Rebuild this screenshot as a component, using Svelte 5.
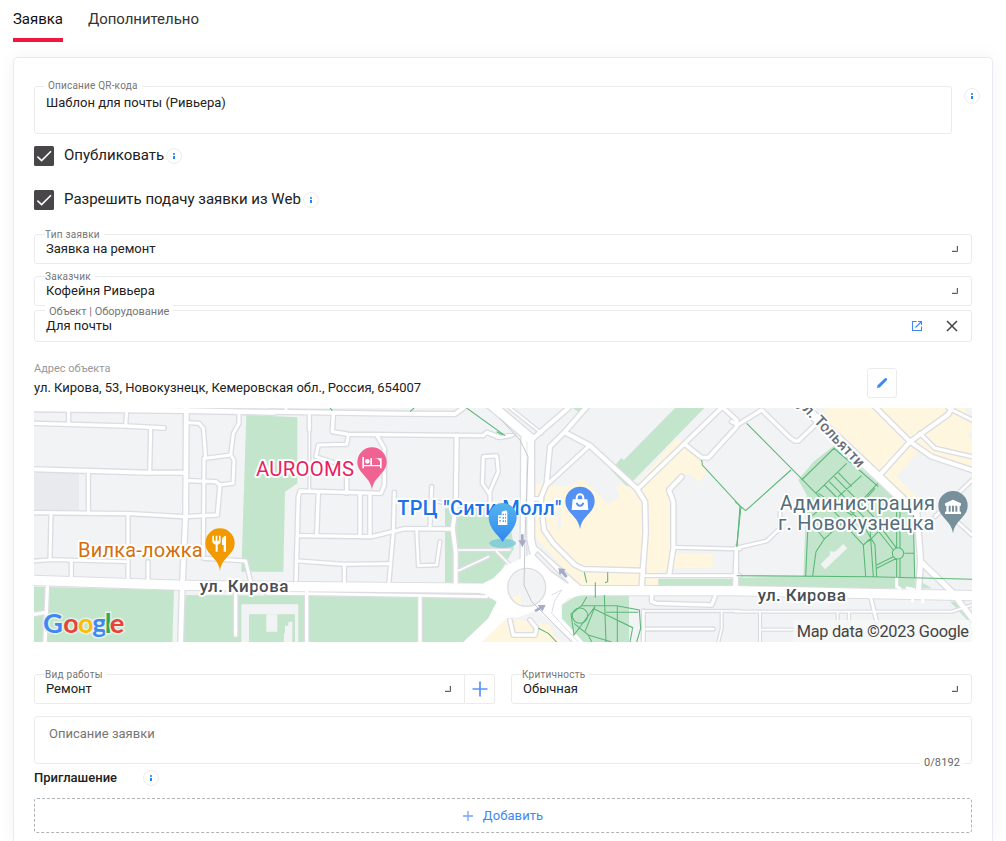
<script>
  const tabs = ['Заявка', 'Дополнительно'];

  // Each map tile keeps its own origin; roads are [width, path].
  const tiles = [
    {
      x: 0,
      roads: [
        [14, 'M0 12L450 17L720 22'],
        [10, 'M0 55L275 63L390 69'],
        [9, 'M104 20V55M278 20L275 60M350 70L347 200M163 203V320'],
        [12, 'M0 193L345 203L450 203'],
        [10, 'M0 323L290 326L450 335L550 330L558 240L545 230L460 227'],
        [14, 'M457 9L455 330L445 540L440 711'],
        [9, 'M465 53L495 55L508 70L515 160L590 150L598 85L615 55V25M590 150L600 165L597 235L555 240'],
        [9, 'M510 160L508 460L635 468L650 530'],
        [9, 'M51 330L48 460M282 330V525M342 470V525M112 470V525'],
        [8, 'M0 468L55 464L275 470'],
        [10, 'M40 545L33 711M0 628L35 622M605 560V690']
      ]
    },
    {
      x: 708,
      roads: [
        [12, 'M0 20L400 26L555 27L580 9'],
        [9, 'M48 9V20M118 30V75'],
        [4, 'M118 75V255'],
        [10, 'M190 28L187 80L235 88L640 92L650 82L690 97L720 92'],
        [9, 'M235 90L230 118L145 120L138 155L190 172'],
        [10, 'M320 90L343 130V240L333 265L90 258L85 275L78 525'],
        [10, 'M230 220V265M145 262L140 390M270 265V390M300 265V390'],
        [10, 'M88 392L305 395L405 371L550 372'],
        [9, 'M373 262L370 380L357 530M485 245L480 365'],
        [5, 'M490 285L520 295'],
        [12, 'M560 92L557 310L548 370L557 440V535'],
        [8, 'M440 375L445 482L500 480L510 410'],
        [9, 'M85 468L220 478L357 476M223 480V535'],
        [9, 'M657 265L637 235L640 155L680 152L685 200L660 258V300'],
        [5, 'M565 435H720M565 497L655 455M680 440L720 480'],
        [8, 'M-10 565L110 566L650 575'],
        [10, 'M110 560V711M450 578V711']
      ]
    },
    {
      x: 1398,
      roads: [
        [6, 'M30 9L125 85'],
        [12, 'M100 100L205 9'],
        [26, 'M-50 -20L92 100'],
        [6, 'M-10 98L40 90'],
        [16, 'M72 100L70 470'],
        [20, 'M92 100V400L100 440'],
        [12, 'M265 0L195 80L150 125L140 235L122 280L132 375L160 415L225 480L250 492L430 497'],
        [13, 'M195 82L270 122L410 250L435 290L437 380L425 545'],
        [10, 'M265 125L140 240M103 282H125'],
        [11, 'M415 250L670 3M555 118L605 158H625L710 65V45L670 9'],
        [12, 'M545 215L507 255L520 290V430L508 508'],
        [8, 'M520 427L720 432M430 512L720 512M708 430L703 550'],
        [18, 'M100 430L235 550'],
        [10, 'M30 645L40 690H105L110 670L90 645'],
        [10, 'M455 570V590L470 595L635 600L645 575'],
        [5, 'M430 618H720M665 620V670L655 711'],
        [8, 'M430 618V711M440 672H640']
      ]
    },
    {
      x: 2103,
      roads: [
        [10, 'M-10 50L10 58L80 15L165 98L180 108H190L245 55'],
        [24, 'M190 -10L430 215L540 320'],
        [15, 'M545 315L557 470L550 560M557 470L650 560L711 640'],
        [12, 'M415 0L525 110L590 155L711 195M430 215L525 110L640 28L655 0'],
        [9, 'M555 85L600 130L711 155M640 9L711 45'],
        [8, 'M0 430L95 408L135 370V325'],
        [8, 'M711 225L600 335M655 340L711 390M5 425V550'],
        [5, 'M0 620H650L711 600M75 620V711M75 674H175M308 622V650M342 622V650'],
        [8, 'M408 580L425 650']
      ]
    }
  ];

  const google = [
    ['G', 27, '#4285f4'], ['o', 88, '#ea4335'], ['o', 132, '#fbbc05'],
    ['g', 175, '#4285f4'], ['l', 212, '#34a853'], ['e', 227, '#ea4335']
  ];
</script>

{#snippet info()}
  <span class="info"><svg width="16" height="16" viewBox="0 0 16 16"><path d="M7 5h2v2H7z" fill="#4c9cf0" /><path d="M7 8h2v3H7z" fill="#2584f5" /></svg></span>
{/snippet}

{#snippet check(text)}
  <div class="check">
    <svg width="20" height="20" viewBox="0 0 20 20"><rect width="20" height="20" rx="1.5" fill="#484648" /><path d="M3.4 10.6L7.6 14.6L17 5.2" fill="none" stroke="#fff" stroke-width="1.6" /></svg>
    <span>{text}</span>
    {@render info()}
  </div>
{/snippet}

{#snippet corner()}
  <svg class="corner" width="6" height="6" viewBox="0 0 6 6"><path d="M4.5 0V4.5H0" fill="none" stroke="#d8d8d8" /><path d="M5.5 0V5.5H0" fill="none" stroke="#5f5f5f" /></svg>
{/snippet}

{#snippet select(label, value)}
  <div class="field select">
    <span class="label">{label}</span>
    <span class="value">{value}</span>
    {@render corner()}
  </div>
{/snippet}

{#snippet pin(x, y, color)}
  <path transform="translate({x} {y})" d="M0 0C-5 -40 -44 -48 -44 -83A44 44 0 0 1 44 -83C44 -48 5 -40 0 0Z" fill={color} />
{/snippet}

<nav class="tabs">
  {#each tabs as tab, i}
    <span class="tab" class:active={i === 0}>{tab}</span>
  {/each}
</nav>

<main class="card">
  <div class="qr">
    <div class="field area">
      <span class="label wide">Описание QR-кода</span>
      <span class="value">Шаблон для почты (Ривьера)</span>
    </div>
    {@render info()}
  </div>

  {@render check('Опубликовать')}
  {@render check('Разрешить подачу заявки из Web')}

  <div class="selects">
    {@render select('Тип заявки', 'Заявка на ремонт')}
    {@render select('Заказчик', 'Кофейня Ривьера')}
  </div>
  <div class="field object">
    <span class="label big">Объект | Оборудование</span>
    <span class="value">Для почты</span>
    <svg width="12" height="12" viewBox="0 0 12 12" fill="none" stroke="#4285f4" stroke-width="1.1"><path d="M5.5 1.5H1.5V10.5H10.5V6.5M7 1.5H10.5V5M10.5 1.5L4.5 7.5" /></svg>
    <svg class="close" width="12" height="12" viewBox="0 0 12 12"><path d="M1 1L11 11M11 1L1 11" stroke="#444" stroke-width="1.5" /></svg>
  </div>

  <section class="address">
    <div>
      <div class="caption">Адрес объекта</div>
      <div class="street">ул. Кирова, 53, Новокузнецк, Кемеровская обл., Россия, 654007</div>
    </div>
    <span class="edit">
      <svg width="12" height="12" viewBox="0 0 12 12"><path d="M1 11L1.6 8.3L8.7 1.4Q9.8 .5 10.8 1.3Q11.6 2.3 10.6 3.4L3.7 10.4Z" fill="#4285f4" /></svg>
    </span>
  </section>

  <svg class="map" width="938" height="234" viewBox="0 9 2814 702">
    <rect y="9" width="2814" height="702" fill="#f1f3f4" />
    <path d="M0 205H135V315H0Z" fill="#e8eaed" />
    <g fill="#c3e5cc">
      <path d="M0 545L420 555L415 711H0ZM455 570L1358 578L1398 585L1373 640L1298 711H445Z" />
      <path d="M637 30L790 37V235L753 260L748 500H622Z" />
      <path d="M1233 310L1420 300L1440 430L1400 500L1360 540H1233Z" />
      <g transform="translate(1398)">
        <path d="M525 9H613L382 245L333 195L363 160L372 165ZM218 9L235 20L245 9ZM390 532L403 521H710V541H390Z" />
        <path d="M185 600L235 570H387V711H235L185 640Z" />
      </g>
      <g transform="translate(2103)">
        <path d="M297 122L430 235L535 330L540 520L590 550H5V518L205 515L215 270L190 225L235 170ZM645 590H685L711 625V660Z" />
      </g>
    </g>
    <path d="M622 598H793V711H622Z" fill="#f1f3f4" />
    <path d="M645 628H783V711H645Z" fill="#c3e5cc" />
    <path d="M697 628H730V680H697ZM753 662H763V650H775V711H750V685H753Z" fill="#f1f3f4" />
    <g fill="#fef6de">
      <g transform="translate(1398)">
        <path d="M105 235L185 245L210 240L250 222L325 298L360 275L350 250L360 235L400 250L530 100L542 105L555 125L605 165L620 205L600 230L565 205L540 220L510 270L520 430L500 500H475V540H235L105 395Z" />
        <path d="M475 446H638V490H475ZM35 577L62 570L66 602L45 605ZM-70 711L-20 655L30 640L150 660L160 690L190 711Z" />
      </g>
      <g transform="translate(2103)">
        <path d="M265 9H690L711 60V195L620 175L560 150H540L485 215L550 280L530 300L430 200L280 50Z" />
      </g>
    </g>
    <path d="M2643 140L2733 160L2814 190L2703 195ZM2800 90L2814 75V105Z" fill="#f1f3f4" />
    <path d="M1568 315L1578 310L1582 370L1570 378Z" fill="#f1f3f4" />

    {#each tiles as tile}
      <g transform="translate({tile.x})" fill="none" stroke="#dcdde2" stroke-linecap="round" stroke-linejoin="round">
        {#each tile.roads as [w, d]}<path {d} stroke-width={w + 8} />{/each}
      </g>
    {/each}
    <path d="M0 526L450 541L800 545L1340 550M1640 557H2100L2814 572" fill="none" stroke="#dcdde2" stroke-width="34" />
    {#each tiles as tile}
      <g transform="translate({tile.x})" fill="none" stroke="#fff" stroke-linecap="round" stroke-linejoin="round">
        {#each tile.roads as [w, d]}<path {d} stroke-width={w} />{/each}
      </g>
    {/each}
    <path d="M0 526L450 541L800 545L1390 550M1600 557H2100L2814 572" fill="none" stroke="#fff" stroke-width="28" />
    <g transform="translate(1398)">
      <path d="M65 460L110 440L150 490L240 542V572L205 580L185 600V640L250 711H225L110 615L60 635L20 640L-55 711H-110L-35 640L-10 590L-50 565V535L-20 520L20 480Z" fill="#fff" />
      <ellipse cx="80" cy="547" rx="57" ry="57" fill="#f1f3f4" stroke="#dcdde2" stroke-width="4" />
      <path d="M35 577L62 570L66 600L50 594Z" fill="#fef6de" />
      <path d="M113 440L205 535L155 500L105 450Z" fill="#f1f3f4" stroke="#dcdde2" stroke-width="4" />
      <path d="M155 570L185 555L163 590L155 625L235 711" fill="none" stroke="#dcdde2" stroke-width="3" />
      <path d="M0 40L60 105L84 155L75 400L72 540L95 590L215 711" fill="none" stroke="#c6c8cb" stroke-width="3" />
      <g fill="#a6abc8">
        <path d="M63 388H71V406H78L67 427L55 406H63ZM175 490L197 492L192 498L203 513L197 519L184 505L179 511ZM137 600L127 620L123 613L107 621L103 615L118 606L113 600Z" />
      </g>
    </g>

    <g fill="none" stroke="#5bb878" stroke-width="3.2">
      <path d="M1298 9L1413 92M888 9L895 17M1140 9L1128 20" />
      <g transform="translate(1398)">
        <path d="M605 165L607 180L720 303L711 425M-10 80L10 90M253 502L260 533M323 502V530L315 533M286 532V578M313 570L318 711M260 576L245 602L213 627L222 690L285 605L255 680M245 602H350L418 615L422 670L410 711M283 612L398 668L390 711M352 602V711M318 622H415M222 655L265 690L335 711M265 690L275 711M115 670L145 685L170 711M220 690L240 668" />
        <circle cx="240" cy="632" r="23" />
      </g>
      <g transform="translate(2103)">
        <path d="M35 55L335 358M168 195L32 317L0 290M18 305L5 425M5 512L410 515L711 523M200 225L297 130L430 245M335 175L242 265M380 212L310 275M428 235L350 320M222 380H218L212 515M222 345L268 402L320 355M268 402L243 440L233 512M268 240L400 372M283 230L420 370M298 215L450 370M310 203L350 245M420 250L350 330L250 265M320 350L385 420L392 515M405 370L415 515M385 420L405 402M390 370L420 420L425 515M425 372L475 435M440 370L485 430M485 320V430M495 320V430M485 460L425 490M475 455L425 480M485 460V517M495 460V517M508 445H537M535 330L539 520M440 370L400 410M222 340L270 300" />
        <circle cx="489" cy="445" r="17" fill="#c3e5cc" />
      </g>
    </g>
    <g transform="translate(2103)">
      <path d="M257 478L285 450V438L300 440L325 417L337 430L270 493Z" fill="#f1f3f4" />
      <path d="M485 518V545L498 552M513 548L535 553L532 592M563 560V595" fill="none" stroke="#fff" stroke-width="9" />
    </g>

    <ellipse cx="1406" cy="415" rx="40" ry="14" fill="#74c6dc" opacity=".75" />
    <g class="halo">
      <text x="132" y="457" font-size="60" fill="#d56e0c" textLength="374">Вилка-ложка</text>
      <text x="666" y="212" font-size="61" fill="#e91e63" textLength="294">AUROOMS</text>
      <text x="1090" y="330" font-size="60" font-weight="500" fill="#1a73e8" textLength="492">ТРЦ "Сити Молл"</text>
      <text x="2238" y="314" font-size="60" fill="#546e7a" textLength="465">Администрация</text>
      <text x="2232" y="375" font-size="60" fill="#546e7a" textLength="469">г. Новокузнецка</text>
      <text x="497" y="562" font-size="51" font-weight="500" fill="#494e54" textLength="266">ул. Кирова</text>
      <text x="2171" y="587" font-size="51" font-weight="500" fill="#494e54" textLength="265">ул. Кирова</text>
      <text transform="translate(2298 -9) rotate(46)" x="0" y="12" font-size="46" font-weight="500" fill="#6a6e74" textLength="266">ул. Тольятти</text>
    </g>

    {@render pin(558, 497, '#f29900')}
    <path transform="translate(558 415)" d="M-23 -23H-18V-8H-13V-23H-8V-8H-3V-23H2V-4Q0 3 -7 4V25H-13V4Q-21 3 -23 -4ZM18 -23V25H11V5H6V-10Q7 -21 18 -23Z" fill="#fff" />
    {@render pin(1014, 254, '#f06292')}
    <path transform="translate(1014 172)" d="M-29 -16H-24V8H24V-2Q20 -13 0 -12V8H-5V-12H29V18H24V12H-24V18H-29Z" fill="#fff" /><circle cx="1000" cy="169" r="7" fill="#fff" />
    {@render pin(1638, 372, '#5491f5')}
    <path transform="translate(1638 291)" d="M-13 -8V-13A13 13 0 0 1 13 -13V-8H22L25 24H-25L-22 -8ZM-7 -8H7V-13A7 7 0 0 0 -7 -13ZM-13 2Q-10 14 0 14T13 2H7Q5 8 0 8T-7 2Z" fill="#fff" fill-rule="evenodd" />
    {@render pin(2757, 385, '#78909c')}
    <path transform="translate(2757 306)" d="M0 -22L24 -11V-4H20V14H24V21H-24V14H-20V-4H-24V-11ZM-13 -4V14H-7V-4ZM-3 -4V14H3V-4ZM7 -4V14H13V-4Z" fill="#fff" fill-rule="evenodd" />
    <defs><linearGradient id="blue" x1="0" y1="0" x2="0" y2="1"><stop stop-color="#55b4ee" /><stop offset="1" stop-color="#3187ef" /></linearGradient></defs>
    <path transform="translate(1406 412)" d="M0 0C-7 -18 -42 -38 -42 -76A42 42 0 0 1 42 -76C42 -38 7 -18 0 0Z" fill="url(#blue)" />
    <path transform="translate(1406 339)" d="M-14 21V-9H-3V-19L10 -23L14 -19V21ZM-10 -4V1H-6V-4ZM-10 6V11H-6V6ZM0 -13V-8H4V-13ZM7 -13V-8H10V-13ZM0 -3V2H4V-3ZM7 -3V2H10V-3ZM0 7V12H4V7ZM7 7V12H10V7Z" fill="#fff" fill-rule="evenodd" />

    <g class="google">
      {#each google as [letter, x, color]}<text {x} y="683" fill={color}>{letter}</text>{/each}
    </g>
    <rect x="2278" y="645" width="536" height="66" fill="#f7f7f7" opacity=".85" />
    <text class="credit" x="2288" y="695" textLength="517">Map data ©2023 Google</text>
  </svg>

  <div class="pair">
    <div class="group">
      {@render select('Вид работы', 'Ремонт')}
      <span class="plus"><svg width="16" height="16" viewBox="0 0 16 16"><path d="M8 .5V15.5M.5 8H15.5" stroke="#5b91fa" stroke-width="1.7" /></svg></span>
    </div>
    {@render select('Критичность', 'Обычная')}
  </div>

  <div class="field area note">
    <span class="placeholder">Описание заявки</span>
    <span class="counter">0/8192</span>
  </div>

  <div class="invite"><span>Приглашение</span>{@render info()}</div>
  <div class="add">
    <svg width="10" height="10" viewBox="0 0 10 10"><path d="M5 0V10M0 5H10" stroke="#75a3fb" stroke-width="1.3" /></svg>
    <span>Добавить</span>
  </div>
</main>

<style>
  :global(html), :global(body) { height: 841px; overflow: hidden; background: #fff; }
  :global(#app) { font-family: Roboto, sans-serif; color: #212121; }
  .tabs { display: flex; gap: 25px; height: 42px; padding-left: 13px; box-sizing: border-box; }
  .tab { font-size: 15px; line-height: 38px; letter-spacing: -.04px; border-bottom: 4px solid transparent; color: #333; white-space: nowrap; }
  .tab.active { border-color: #ee1840; color: #111; }
  .card { box-sizing: border-box; width: 980px; height: 784px; margin: 15px 0 0 13px; padding: 28px 20px 0; border: 1px solid #e9ebf2; border-bottom: 0; border-radius: 5px 5px 0 0; box-shadow: 0 0 18px rgba(0, 0, 0, .05); background: #fff; }
  .qr { display: flex; width: 946px; gap: 12px; }
  .qr .area { width: 918px; flex: none; }
  .qr :global(.info) { margin-top: 2px; }
  .info { box-sizing: border-box; width: 16px; height: 16px; flex: none; border: 1px solid #ececec; border-radius: 50%; }
  .info svg { display: block; margin: -1px; }
  .field { position: relative; box-sizing: border-box; display: flex; border: 1px solid #ebebeb; border-radius: 3px; font-size: 13px; letter-spacing: 0; }
  .area { height: 48px; }
  .area .value { margin: 8px 0 0 11px; line-height: 15px; }
  .label { position: absolute; top: -6px; left: 10px; padding-right: 4px; background: #fff; color: #757575; font-size: 10px; line-height: 12px; letter-spacing: .25px; white-space: nowrap; }
  .label.wide { top: -7px; left: 9px; padding-left: 4px; letter-spacing: .2px; }
  .label.big { top: -6px; padding-left: 4px; font-size: 11px; line-height: 13px; letter-spacing: 0; }
  .check { display: flex; align-items: center; height: 20px; margin-top: 12px; }
  .check + .check { margin-top: 24px; }
  .check span:not(.info) { margin: -3px 2px 0 10px; font-size: 15px; line-height: 20px; white-space: nowrap; }
  .selects { display: grid; gap: 12px; margin-top: 24px; }
  .select { height: 30px; padding: 0 13px 0 11px; align-items: center; justify-content: space-between; flex: 1; }
  .select .value { line-height: 28px; }
  .object { height: 32px; margin-top: 4px; padding: 0 13px 0 11px; align-items: center; }
  .object .value { flex: 1; padding-bottom: 2px; }
  .close { margin-left: 23px; }
  .address { display: flex; justify-content: space-between; margin-top: 19px; height: 36px; padding-right: 75px; }
  .caption { color: #999; font-size: 11px; line-height: 15px; }
  .street { margin-top: 4px; font-size: 13px; line-height: 15px; }
  .edit { display: grid; place-items: center; box-sizing: border-box; width: 30px; height: 30px; margin-top: 7px; border: 1px solid #ebebeb; border-radius: 3px; }
  .map { display: block; margin-top: 11px; font-family: Roboto, sans-serif; }
  .halo text { stroke: #fff; stroke-width: 12px; stroke-linejoin: round; paint-order: stroke; }
  .google { font: 700 82px Lato, sans-serif; }
  .google text { stroke: #e4f3e8; stroke-width: 9px; paint-order: stroke; }
  .credit { font-size: 49px; fill: #444; }
  .pair { display: grid; grid-template-columns: 461px 461px; gap: 16px; margin-top: 32px; }
  .group { display: flex; }
  .group :global(.select) { border-radius: 3px 0 0 3px; }
  .plus { display: grid; place-items: center; box-sizing: border-box; width: 30px; height: 30px; border: 1px solid #ebebeb; border-left: 0; border-radius: 0 3px 3px 0; }
  .note { margin-top: 12px; }
  .placeholder { margin: 9px 0 0 14px; color: #757575; line-height: 15px; }
  .counter { position: absolute; right: 7px; bottom: -7px; padding: 0 4px; background: #fff; color: #666; font-size: 11px; line-height: 14px; letter-spacing: .1px; }
  .invite { display: flex; align-items: center; gap: 26px; height: 16px; margin-top: 6px; font-size: 13px; font-weight: 500; }
  .invite span:first-child { margin-top: -2px; }
  .add { display: flex; align-items: center; justify-content: center; gap: 10px; box-sizing: border-box; height: 35px; margin-top: 12px; border: 1px dashed #b3b3b3; border-radius: 3px; color: #4285f4; font-size: 13px; letter-spacing: .1px; }
</style>
